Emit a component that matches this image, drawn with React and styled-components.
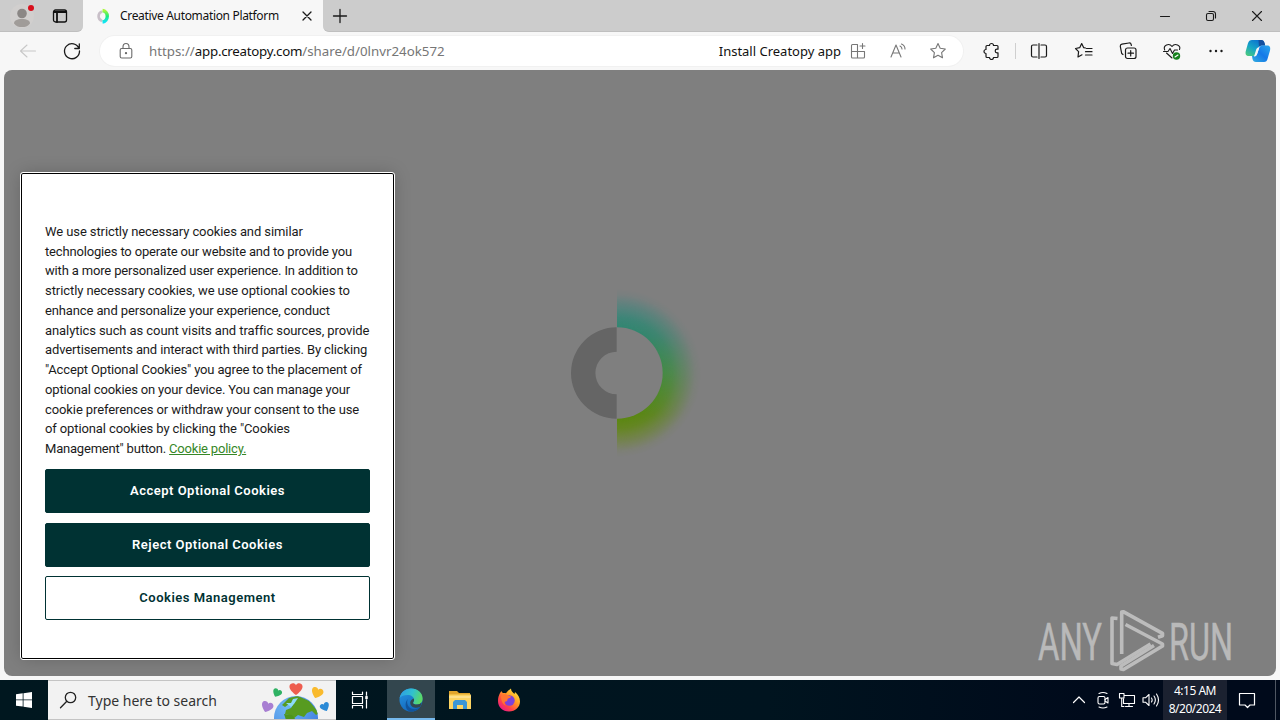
import React from 'react';
import styled, { createGlobalStyle } from 'styled-components';

const GlobalStyle = createGlobalStyle`
  * {
    box-sizing: border-box;
  }
  body {
    margin: 0;
    overflow: hidden;
    background: #f7f7f7;
  }
  svg {
    display: block;
    flex: none;
  }
`;

const Screen = styled.div`
  width: 1280px;
  height: 720px;
  display: flex;
  flex-direction: column;
  overflow: hidden;
  font-family: 'Noto Sans', 'Open Sans', sans-serif;
`;

const TabStrip = styled.div`
  height: 32px;
  display: flex;
  background: #f7f7f7;
`;

const ProfileArea = styled.div`
  width: 83px;
  display: flex;
  align-items: center;
  background: #cccccc;
  border-bottom-right-radius: 6px;
  border-bottom: 1px solid #bfbfbf;
`;

const Tab = styled.div`
  width: 240px;
  display: flex;
  align-items: center;
  padding-left: 12px;
`;

const TabTitle = styled.span`
  width: 182px;
  margin-left: 9px;
  font-size: 12px;
  line-height: 32px;
  letter-spacing: -0.33px;
  color: #111;
  white-space: nowrap;
`;

const StripRest = styled.div`
  flex: 1;
  display: flex;
  align-items: center;
  padding-left: 8px;
  background: #cccccc;
  border-bottom-left-radius: 6px;
  border-bottom: 1px solid #bfbfbf;
`;

const WindowButtons = styled.div`
  display: flex;
  margin-left: auto;
`;

const Slot = styled.div`
  width: ${({ width }) => width}px;
  padding-left: ${({ lead }) => lead || 0}px;
  padding-right: ${({ trail }) => trail || 0}px;
  display: flex;
  justify-content: center;
  align-items: center;
  flex: none;
`;

const Toolbar = styled.div`
  height: 38px;
  display: flex;
  align-items: center;
  padding-left: 6px;
  background: #f7f7f7;
`;

const AddressBar = styled.div`
  width: 863px;
  height: 30px;
  margin-left: 6px;
  display: flex;
  align-items: center;
  padding: 0 8px 0 6px;
  border-radius: 15px;
  background: #fff;
  box-shadow: 0 0 0 1px #f1f1f1;
`;

const Url = styled.span`
  margin-left: 3px;
  font-size: 13.3px;
  color: #767676;
  white-space: nowrap;

  b {
    font-weight: 400;
    letter-spacing: -0.25px;
    color: #111;
  }
`;

const InstallText = styled.span`
  margin-left: auto;
  font-size: 13px;
  color: #111;
  white-space: nowrap;
`;

const Divider = styled.div`
  width: 1px;
  height: 16px;
  background: #cfcfcf;
`;

const PageFrame = styled.div`
  height: 610px;
  padding: 0 4px 4px;
  background: #f7f7f7;
`;

const Page = styled.div`
  position: relative;
  height: 606px;
  display: flex;
  align-items: center;
  justify-content: center;
  border-radius: 8px;
  background: #7f7f7f;
  overflow: hidden;
`;

const CookieDialog = styled.div`
  position: absolute;
  left: 17px;
  bottom: 17px;
  width: 373px;
  height: 486px;
  padding: 48px 23px 0;
  background: #fff;
  border: 1px solid #000;
  outline: 1px solid #fff;
  border-radius: 2px;
  box-shadow: 0 0 18px rgba(0, 0, 0, 0.2);
  font-family: Roboto, sans-serif;
`;

const CookieText = styled.p`
  margin: 0 0 10px;
  font-size: 13px;
  line-height: 19.73px;
  color: #1b1b1b;
`;

const Line = styled.span`
  display: block;
  white-space: nowrap;
  letter-spacing: ${({ spacing }) => spacing || 0}px;
`;

const PolicyLink = styled.a`
  color: #368727;
  text-decoration: underline;
`;

const CookieButton = styled.button`
  display: block;
  width: 325px;
  height: 44px;
  margin: 0 0 ${({ gap }) => gap || 0}px;
  padding: 0;
  border: 1px solid #003233;
  border-radius: 2px;
  background: ${({ outlined }) => (outlined ? '#fff' : '#003233')};
  color: ${({ outlined }) => (outlined ? '#003233' : '#fff')};
  font-family: Roboto, sans-serif;
  font-size: 13px;
  font-weight: 600;
  letter-spacing: 0.5px;
`;

const Watermark = styled.svg`
  position: absolute;
  right: 2px;
  bottom: 2px;
`;

const Taskbar = styled.div`
  height: 40px;
  display: flex;
  align-items: stretch;
  background: linear-gradient(90deg, #00171f 0%, #00141f 60%, #000a1b 85%, #000a1b 100%);
`;

const SearchBox = styled.div`
  width: 288px;
  display: flex;
  align-items: center;
  padding-left: 11px;
  background: #f2f2f2;
  border: 1px solid #c4c4c4;
  border-width: 1px 0;
  color: #333;
  overflow: hidden;
`;

const SearchText = styled.span`
  width: 172px;
  margin-left: 11px;
  font-size: 14px;
  white-space: nowrap;
`;

const TaskButton = styled(Slot)`
  background: ${({ active }) => (active ? '#33464e' : 'transparent')};
  box-shadow: ${({ active }) => (active ? 'inset 0 -2px 0 #76b9ed' : 'none')};
`;

const Tray = styled.div`
  display: flex;
  margin-left: auto;
`;

const Clock = styled.div`
  width: 64px;
  padding-top: 2px;
  background: #1b2130;
  color: #fff;
  font-size: 12px;
  line-height: 18px;
  letter-spacing: -0.5px;
  text-align: center;
  white-space: nowrap;
`;

const DesktopEdge = styled.div`
  width: 5px;
  border-left: 1px solid #4f5763;
`;

const Icon = ({ size = 20, color = '#1a1a1a', stroke = 1.1, children }) => (
  <svg
    width={size}
    height={size}
    viewBox={`0 0 ${size} ${size}`}
    fill="none"
    stroke={color}
    strokeWidth={stroke}
    strokeLinecap="round"
    strokeLinejoin="round"
  >
    {children}
  </svg>
);

const STAR = 'M10 2.6l2.2 4.7 5.1.7-3.7 3.6.9 5.2-4.5-2.5-4.5 2.5.9-5.2L2.7 8l5.1-.7z';

const ProfileIcon = () => (
  <svg width="28" height="28" viewBox="0 0 28 28">
    <circle cx="14" cy="14" r="12" fill="#d1cfce" />
    <circle cx="14" cy="11.5" r="4.8" fill="#8b8785" />
    <path d="M6 21.5c0-3 3-4.5 8-4.5s8 1.500 8 4.500c-2 3-5 3.500-8 3.500s-6-.5-8-3.500z" fill="#a09c99" />
    <circle cx="23" cy="6" r="3" fill="#d80f1c" />
  </svg>
);

const Favicon = () => (
  <svg width="16" height="16" viewBox="0 0 16 16" fill="none" strokeWidth="2.6">
    <defs>
      <linearGradient id="fav" x1="0" y1="0" x2="0" y2="1">
        <stop offset="0" stopColor="#a8f53c" />
        <stop offset=".5" stopColor="#1eea7a" />
        <stop offset="1" stopColor="#10e4f5" />
      </linearGradient>
    </defs>
    <path d="M7 3.500a5 5 0 0 0 0 9.500" stroke="#c8bfc8" />
    <path d="M7.500 2.500a5.500 5.800 0 0 1 0 11.500" stroke="url(#fav)" strokeWidth="3.400" />
  </svg>
);

const CopilotIcon = () => (
  <svg width="26" height="24" viewBox="0 0 26 24">
    <defs>
      <linearGradient id="copA" x1="0" y1="1" x2=".7" y2="0">
        <stop offset="0" stopColor="#52cf75" />
        <stop offset=".5" stopColor="#16a5c6" />
        <stop offset="1" stopColor="#0b6fd0" />
      </linearGradient>
      <linearGradient id="copB" x1="1" y1="0" x2="0" y2="1">
        <stop offset="0" stopColor="#2ba9ee" />
        <stop offset=".5" stopColor="#1478e8" />
        <stop offset="1" stopColor="#33aee0" />
      </linearGradient>
    </defs>
    <path d="M7 1h9c2 0 3 1 3.500 3l.7 2.500h-3.500c-2 0-3 1-3.600 3l-1.600 5C11 16 10 17 8 17H4c-3 0-4-2-3.200-5l2.100-7.500C3.600 2 5 1 7 1z" fill="url(#copA)" />
    <path d="M13.500 1h2.500c2 0 3 1 3.500 3l.7 2.500H17c-1.500 0-2.300.5-3 1.500z" fill="#14509f" />
    <path d="M19 23h-8c-2 0-3-1-3.500-3L7 17h2c2 0 3-1 3.600-3l1.600-5c.5-1.600 1.500-2.500 3.300-2.500H22c3 0 3.700 2 3 5l-2.200 7.500C22 22 21 23 19 23z" fill="url(#copB)" />
    <path d="M14.200 8.500l-2.600 7.500c-.5 1-1.300 1.600-2.600 1.500l2.400-7.500c.5-1 1.300-1.600 2.800-1.500z" fill="#f7f7f7" />
  </svg>
);

const Spinner = () => (
  <svg width="180" height="190" viewBox="0 0 180 190">
    <defs>
      <linearGradient id="glow" x1="0" y1="0" x2="0" y2="1">
        <stop offset="0" stopColor="#2f8785" />
        <stop offset=".28" stopColor="#34866d" />
        <stop offset=".5" stopColor="#468a45" />
        <stop offset=".75" stopColor="#5a8713" />
        <stop offset="1" stopColor="#6d8710" />
      </linearGradient>
      <radialGradient id="fade" gradientUnits="userSpaceOnUse" cx="67" cy="95" r="84">
        <stop offset=".55" stopColor="#fff" />
        <stop offset=".66" stopColor="#fff" stopOpacity=".85" />
        <stop offset=".82" stopColor="#fff" stopOpacity=".4" />
        <stop offset=".93" stopColor="#fff" stopOpacity=".08" />
        <stop offset="1" stopColor="#fff" stopOpacity="0" />
      </radialGradient>
      <mask id="glowMask" maskUnits="userSpaceOnUse" x="0" y="0" width="180" height="190">
        <circle cx="67" cy="95" r="84" fill="url(#fade)" />
      </mask>
    </defs>
    <rect x="67" y="11" width="86" height="168" fill="url(#glow)" mask="url(#glowMask)" />
    <path d="M67 49.300a45.700 45.700 0 0 1 0 91.400z" fill="#7f7f7f" />
    <path d="M66.700 49.300a45.700 45.700 0 0 0 0 91.400v-24.400a21.300 21.300 0 0 1 0-42.600z" fill="#656565" />
  </svg>
);

const AnyRunMark = () => (
  <Watermark width="240" height="70" viewBox="1034 604 240 70">
    <g fill="#b9b9b9" stroke="#b9b9b9" strokeWidth=".5" fontFamily="Roboto, sans-serif" fontWeight="400" fontSize="51">
      <text x="1038" y="659.500" textLength="64" lengthAdjust="spacingAndGlyphs">ANY</text>
      <text x="1169" y="659.500" textLength="64" lengthAdjust="spacingAndGlyphs">RUN</text>
    </g>
    <g fill="none" stroke="#bcbcbc" strokeWidth="3.600" strokeLinejoin="round">
      <path d="M1117.500 618.500l-5.500-.5v45.500l5 1 33.500-20.500" />
      <path d="M1121.700 654v-42l1.500-.3 39.300 21.600v2.500l-4.500 1.500" />
      <path d="M1125.500 624.500l37 19.500v2l-39 23.500-2.500-.5v-3l33-20.500" />
    </g>
  </Watermark>
);

const Globe = () => (
  <svg width="72" height="38" viewBox="260 681 72 38">
    <defs>
      <radialGradient id="sea" cx=".3" cy=".25" r=".9">
        <stop offset="0" stopColor="#70b9f3" />
        <stop offset="1" stopColor="#3b78df" />
      </radialGradient>
      <clipPath id="globeClip">
        <circle cx="296" cy="718" r="22" />
      </clipPath>
      <path id="heart" d="M0 6C-3 4-7 0-6.500-3-6-6-1.500-7 0-3.800 1.500-7 6-6 6.500-3 7 0 3 4 0 6z" />
    </defs>
    <circle cx="296" cy="718" r="22" fill="url(#sea)" />
    <g clipPath="url(#globeClip)">
      <path d="M282 705l7-7 9-2 11 5 10 12-3 2-4-4-5 2-3 4-6-2-5 4-4-4-4-1 1-4 5-2 2-3-4-1-4 3z" fill="#579b20" />
      <path d="M284 714l8 1 4 5h-10z" fill="#4d951b" />
      <path d="M286 703l5 0 2-4 5-1-4 6-3 3z" fill="#8cdaf7" />
    </g>
    <use href="#heart" transform="translate(296 689)" fill="#ee5d4f" />
    <use href="#heart" transform="translate(277 693) rotate(25) scale(.7)" fill="#2fb263" />
    <use href="#heart" transform="translate(317 693) rotate(20) scale(.9)" fill="#f9ba2d" />
    <use href="#heart" transform="translate(267 707) rotate(20) scale(.9)" fill="#a87fd2" />
    <use href="#heart" transform="translate(325 707) rotate(-25) scale(.72)" fill="#2b8ad6" />
  </svg>
);

const EdgeIcon = () => (
  <svg width="24" height="24" viewBox="0 0 24 24">
    <defs>
      <linearGradient id="edgeTop" x1="0" y1=".3" x2="1" y2=".6">
        <stop offset="0" stopColor="#2e9fe4" />
        <stop offset=".5" stopColor="#31c0cf" />
        <stop offset="1" stopColor="#5edb5c" />
      </linearGradient>
      <linearGradient id="edgeLow" x1="0" y1="0" x2=".5" y2="1">
        <stop offset="0" stopColor="#2898e4" />
        <stop offset="1" stopColor="#1267bc" />
      </linearGradient>
    </defs>
    <circle cx="12" cy="12" r="11.500" fill="url(#edgeLow)" />
    <path d="M.6 10C2 4 6.500.5 12 .5c7 0 11.600 4.500 11.600 10 0 4-2.600 6-5.600 6-2.500 0-4-.7-4-1.500 0-.6 1-1.300 1-3C15 9 12.500 7 8.500 7 5 7 2 8 .6 10z" fill="url(#edgeTop)" />
    <path d="M9 11c-2 3-.5 9 5 10 3 .5 5.500-.5 7.500-2.500C19.500 22 16 23.500 12 23.500 6 23.500 5 14 9 11z" fill="#11549c" />
    <path d="M14.800 10.500c1 2-.8 3.500-.8 4.500 0 .8 1.500 1.500 4 1.500 2 0 3.500-.8 4.500-2-.3 2.500-.8 3.500-1.800 4.500-3 1.500-9 1-9.500-4-.1-2 1.500-4 3.600-4.500z" fill="#33464e" />
  </svg>
);

const FolderIcon = () => (
  <svg width="24" height="22" viewBox="0 0 24 22">
    <path d="M1 2h8l2 2h11v5H1z" fill="#e2a62b" />
    <path d="M1 5.500h22v14.500H1z" fill="#fcd462" />
    <path d="M1 7h22v2H1z" fill="#ffe08a" />
    <path d="M5 20v-7l2-2h10l2 2v7h-4v-4H9v4z" fill="#3a96d6" />
  </svg>
);

const FirefoxIcon = () => (
  <svg width="24" height="24" viewBox="0 0 24 24">
    <defs>
      <linearGradient id="fox" x1=".85" y1=".1" x2=".2" y2=".9">
        <stop offset="0" stopColor="#ffe13d" />
        <stop offset=".4" stopColor="#ff9a25" />
        <stop offset=".75" stopColor="#ff4447" />
        <stop offset="1" stopColor="#ee1f7e" />
      </linearGradient>
    </defs>
    <path d="M3 5c.6-.8 1-1.300 1.300-2 .5 1 1 1.600 1.700 2 1-.2 2-.1 3 .2C10.500 3 12 2 14 .5c0 2.500 1.500 3.500 3.500 5.500l.5-2c3 2.500 5 5.500 5 9.500C23 19 18.500 23.500 12 23.500S1 19 1 13c0-3 .7-5.500 2-8z" fill="url(#fox)" />
    <circle cx="12.500" cy="12.500" r="5.200" fill="#7a42dc" />
    <path d="M4 8c2-2 5-2.500 7-.5l3 1c-.5 1.500-2 1.500-3 2-1 .6 0 1.500-1 2.500-1.300 1-2.500 0-2.500 2 0 1 .8 2 1.500 2.500C6 17 4 13 4 8z" fill="#ff7632" />
  </svg>
);

const COOKIE_LINES = [
  { text: 'We use strictly necessary cookies and similar', spacing: -0.09 },
  { text: 'technologies to operate our website and to provide you', spacing: -0.167 },
  { text: 'with a more personalized user experience. In addition to', spacing: -0.16 },
  { text: 'strictly necessary cookies, we use optional cookies to', spacing: -0.075 },
  { text: 'enhance and personalize your experience, conduct', spacing: -0.125 },
  { text: 'analytics such as count visits and traffic sources, provide', spacing: -0.085 },
  { text: 'advertisements and interact with third parties. By clicking', spacing: -0.135 },
  { text: '"Accept Optional Cookies" you agree to the placement of', spacing: -0.145 },
  { text: 'optional cookies on your device. You can manage your', spacing: -0.155 },
  { text: 'cookie preferences or withdraw your consent to the use', spacing: -0.093 },
  { text: 'of optional cookies by clicking the "Cookies', spacing: -0.114 },
];

const BrowserTabs = () => (
  <TabStrip>
    <ProfileArea>
      <Slot width={44}><ProfileIcon /></Slot>
      <Slot width={32}>
        <Icon size={16}>
          <rect x="1.500" y="2" width="13" height="12" rx="2" stroke="#111" strokeWidth="1.300" />
          <path d="M2 4h12M5 5v9" stroke="#111" strokeWidth="1.800" />
        </Icon>
      </Slot>
    </ProfileArea>
    <Tab>
      <Favicon />
      <TabTitle>Creative Automation Platform</TabTitle>
      <Icon size={10} stroke={1.300}><path d="M1 1l8 8M9 1L1 9" /></Icon>
    </Tab>
    <StripRest>
      <Icon size={18} stroke={1.300}><path d="M9 2.500v13M2.500 9h13" /></Icon>
      <WindowButtons>
        <Slot width={46}><Icon size={12}><path d="M1.500 6.500h9" /></Icon></Slot>
        <Slot width={46}>
          <Icon size={12}>
            <rect x="1.500" y="3.500" width="7" height="7" rx="1.500" />
            <path d="M4 1.500h4a2.500 2.500 0 0 1 2.500 2.500v4" />
          </Icon>
        </Slot>
        <Slot width={46}><Icon size={12}><path d="M1.500 1.500l9 9M10.500 1.500l-9 9" /></Icon></Slot>
      </WindowButtons>
    </StripRest>
  </TabStrip>
);

const BrowserToolbar = () => (
  <Toolbar>
    <Slot width={44}>
      <Icon color="#c8c8c8"><path d="M17.500 10H3M9 4l-6.500 6L9 16" /></Icon>
    </Slot>
    <Slot width={44}>
      <Icon stroke={1.300}><path d="M17 7.500A7.500 7.500 0 1 0 17.500 10M17.300 3v4.500h-4.500" /></Icon>
    </Slot>
    <AddressBar>
      <Slot width={40}>
        <Icon color="#6b6b6b">
          <rect x="4.200" y="7.500" width="11.600" height="9.500" rx="1.500" />
          <path d="M7 7.500V6a3 3.500 0 0 1 6 0v1.500" />
          <circle cx="10" cy="12.200" r=".6" fill="#6b6b6b" />
        </Icon>
      </Slot>
      <Url>https://<b>app.creatopy.com</b>/share/d/0lnvr24ok572</Url>
      <InstallText>Install Creatopy app</InstallText>
      <Slot width={34}>
        <Icon color="#777">
          <path d="M9.500 3.500h-5a1 1 0 0 0-1 1v11.500a1 1 0 0 0 1 1h11a1 1 0 0 0 1-1v-5.500h-13M9.500 3.500v13.500M14.500 2.500v5M12 5h5" />
        </Icon>
      </Slot>
      <Slot width={46}>
        <Icon color="#777">
          <path d="M3 16L8 4l5 12M4.800 12h6.500M12 5c1.300.7 2 1.700 2 3M13.500 3c2.200 1 3.500 2.800 3.500 5" />
        </Icon>
      </Slot>
      <Slot width={34}><Icon color="#777"><path d={STAR} /></Icon></Slot>
    </AddressBar>
    <Slot width={52} lead={4}>
      <Icon size={18} stroke={1.200}>
        <path d="M5 3.500h2.500a2 2 0 0 1 4 0H15a1 1 0 0 1 1 1V7.200h-1a1.800 1.800 0 0 0 0 3.600h1v3.700a1 1 0 0 1-1 1h-3.500a2 2 0 0 1-4 0H5a1 1 0 0 1-1-1v-3a2 2 0 0 1 0-4v-3a1 1 0 0 1 1-1z" />
      </Icon>
    </Slot>
    <Divider />
    <Slot width={46}>
      <Icon stroke={1.200}>
        <path d="M8 4H4a1.500 1.500 0 0 0-1.500 1.500v9A1.500 1.500 0 0 0 4 16h4M12 4h4a1.500 1.500 0 0 1 1.500 1.500v9A1.500 1.500 0 0 1 16 16h-4M10 2.500v15" />
      </Icon>
    </Slot>
    <Slot width={44}>
      <Icon stroke={1.200}>
        <path d="M11.500 7L9.700 6.700 7.700 2.500 5.700 6.700 1.500 7.500 4.600 10.600 4 16l4-2.200M12.500 7.500H18M11.500 10.700H18M11.500 14H18" />
      </Icon>
    </Slot>
    <Slot width={44}>
      <Icon stroke={1.200}>
        <rect x="7.500" y="7" width="10.500" height="10.500" rx="2" />
        <path d="M12.700 9.500v5.500M10 12.200h5.500M5 13.500l-1.300-1L2.300 5.300a2 2 0 0 1 1.600-2.200l7-1.100a2 2 0 0 1 2.300 1.600l.2.900" />
      </Icon>
    </Slot>
    <Slot width={44}>
      <Icon stroke={1.100}>
        <path d="M2.700 9C.8 4.500 7 1.500 10 5.500 13 1.500 19.200 4.500 17.500 8.500M4.500 12l5.500 5M1.500 10.500H6l2-3 2.500 5 2-3.500h3" />
        <circle cx="14.500" cy="15" r="3.700" fill="#16821d" stroke="none" />
        <path d="M13 16l3-2" stroke="#fff" />
      </Icon>
    </Slot>
    <Slot width={44}>
      <Icon>
        <g fill="#1a1a1a" stroke="none">
          <circle cx="4.500" cy="10" r="1.200" />
          <circle cx="10" cy="10" r="1.200" />
          <circle cx="15.500" cy="10" r="1.200" />
        </g>
      </Icon>
    </Slot>
    <Slot width={40}><CopilotIcon /></Slot>
  </Toolbar>
);

const CookieConsent = () => (
  <CookieDialog>
    <CookieText>
      {COOKIE_LINES.map(({ text, spacing }) => <Line key={text} spacing={spacing}>{text}</Line>)}
      <Line spacing={-0.2}>Management" button. <PolicyLink>Cookie policy.</PolicyLink></Line>
    </CookieText>
    <CookieButton gap={10}>Accept Optional Cookies</CookieButton>
    <CookieButton gap={9}>Reject Optional Cookies</CookieButton>
    <CookieButton outlined>Cookies Management</CookieButton>
  </CookieDialog>
);

const WindowsTaskbar = () => (
  <Taskbar>
    <TaskButton width={48}>
      <svg width="16" height="16" viewBox="0 0 16 16" fill="#fff">
        <path d="M0 2.300L6.700 1.300V7.500H0zM7.500 1.200L16 0v7.500H7.500zM0 8.300h6.700v6.300L0 13.700zM7.500 8.300H16V16l-8.500-1.200z" />
      </svg>
    </TaskButton>
    <SearchBox>
      <Icon size={18} stroke={1.300} color="#222">
        <circle cx="11.500" cy="6.500" r="5.200" />
        <path d="M7.800 10.300L1.500 16.700" />
      </Icon>
      <SearchText>Type here to search</SearchText>
      <Globe />
    </SearchBox>
    <TaskButton width={51} trail={3}>
      <Icon size={18} color="#fff" stroke={1.200}>
        <path d="M1.500 1v2.500h10V1M1.500 17v-2.500h10V17M15.500 1v3M15.500 9v8" />
        <rect x="1.500" y="5.500" width="10" height="7" />
        <path d="M15.500 5.800v1.500" strokeWidth="2.500" />
      </Icon>
    </TaskButton>
    <TaskButton width={48} active><EdgeIcon /></TaskButton>
    <TaskButton width={49}><FolderIcon /></TaskButton>
    <TaskButton width={49}><FirefoxIcon /></TaskButton>
    <Tray>
      <Slot width={24}><Icon size={14} color="#fff" stroke={1.200}><path d="M1.500 9.500L7 4l5.500 5.500" /></Icon></Slot>
      <Slot width={24}>
        <Icon size={18} color="#fff">
          <rect x="4" y="5.500" width="7" height="7.500" rx="1.500" />
          <path d="M11 8.500l3-2v5.500l-3-2M5 2.500q4-2 8 0M5 16q4 2 8 0" />
        </Icon>
      </Slot>
      <Slot width={24}>
        <Icon size={18} color="#fff">
          <path d="M6 4.500h10.500v8H5.500V8M11 12.500v3M7.500 15.500h7M1.500 2.500h4.500v4.500H1.500zM3.700 7v8.500H6" />
        </Icon>
      </Slot>
      <Slot width={24}>
        <Icon size={18} color="#fff">
          <path d="M1 6.800h2.500L7 3.500v11l-3.500-3.300H1zM9.500 7q1.300 2 0 4M12 5q2.700 4 0 8M14.500 3q4 6 0 12" />
        </Icon>
      </Slot>
      <Clock>
        <div>4:15 AM</div>
        <div>8/20/2024</div>
      </Clock>
      <Slot width={40}>
        <Icon size={18} color="#fff" stroke={1.200}><path d="M1.500 2.500h15v11.500h-4.500L9.500 16.500 7 14H1.500z" /></Icon>
      </Slot>
      <Slot width={8} />
      <DesktopEdge />
    </Tray>
  </Taskbar>
);

const App = () => (
  <Screen>
    <GlobalStyle />
    <BrowserTabs />
    <BrowserToolbar />
    <PageFrame>
      <Page>
        <Spinner />
        <CookieConsent />
        <AnyRunMark />
      </Page>
    </PageFrame>
    <WindowsTaskbar />
  </Screen>
);

export default App;
